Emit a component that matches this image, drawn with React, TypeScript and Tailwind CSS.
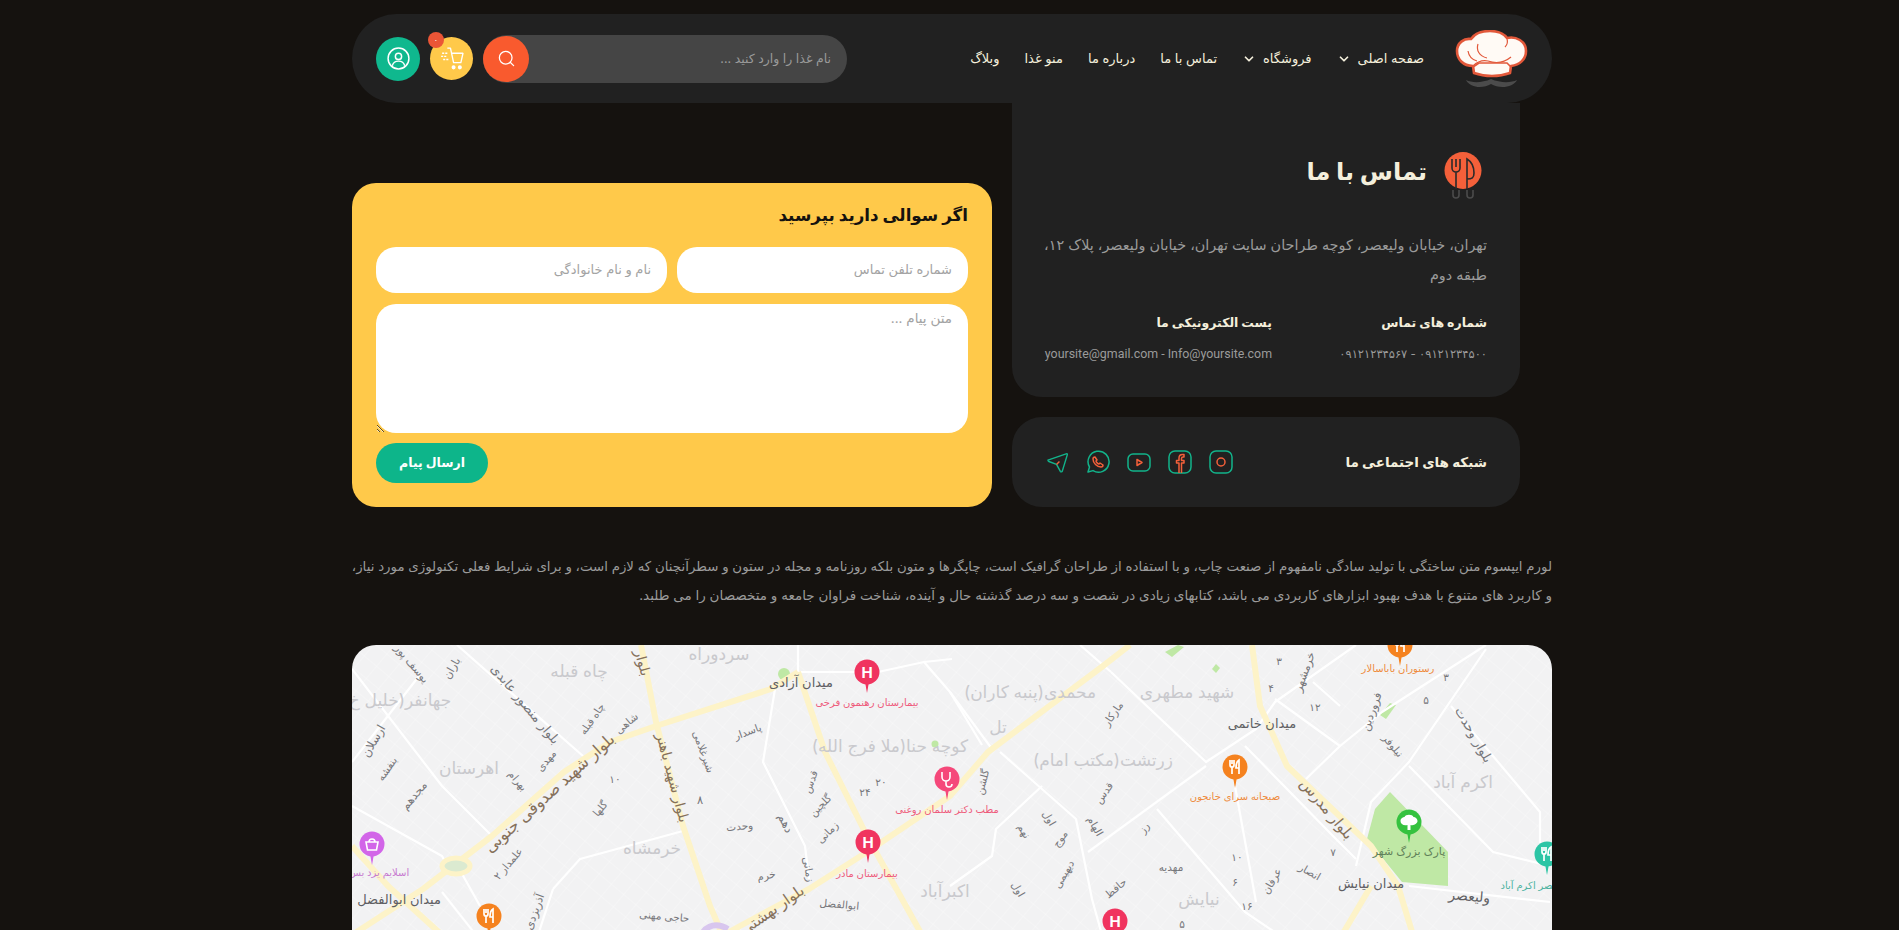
import { ChevronDown, Search } from 'lucide-react';

const navItems = [
  { label: 'صفحه اصلی', arrow: true },
  { label: 'فروشگاه', arrow: true },
  { label: 'تماس با ما', arrow: false },
  { label: 'درباره ما', arrow: false },
  { label: 'منو غذا', arrow: false },
  { label: 'وبلاگ', arrow: false },
];

const GREEN = '#12b48b';
const RED = '#f4603a';

const yellowRoads = [
  '289,0 304,77 331,181 358,261 368,284 400,300',
  '0,290 71,244 140,191 212,127 258,97 304,81 419,44 446,27',
  '0,201 36,241 90,290',
  '446,27 473,107 515,191 570,290',
  '372,290 388,281 457,244 515,207 598,151 636,107 751,21 778,0',
  '900,0 908,61 935,121 1019,201 1046,241 1061,290',
  '1019,241 990,290',
];

const whiteRoads = [
  '105,0 231,111', '0,24 90,141 140,191', '67,31 0,117', '0,161 90,211 96,222',
  '201,244 228,214 331,186', '446,0 446,27', '423,44 411,117 453,201 457,234',
  '446,27 526,27 572,17 598,47 640,104', '572,17 600,14', '90,247 124,290', '109,227 128,261',
  '759,27 854,117 904,84 923,57 1004,0', '728,0 759,27', '854,121 736,207',
  '648,107 724,174 740,254 750,290', '690,141 644,184 640,211 598,241',
  '805,164 893,267 927,290', '883,141 904,257', '893,101 981,191 1004,214',
  '954,134 988,101 1030,67 1134,0', '1004,221 1019,157 1057,117 1134,4',
  '1057,121 1141,207 1198,221', '1057,241 1198,257', '1099,61 1188,167 1188,207',
  '923,54 988,101', '961,37 988,61', '201,244 186,290', '598,47 630,100',
];

type Label = [string, number, number, number, number, string];

const DIST = '#c9c9cd';
const ROAD = '#77777b';
const DARK = '#5f5f63';
const BROWN = '#85705a';
const PINK = '#ee5c7c';
const ORANGE = '#ee8a3c';

const labels: Label[] = [
  ['چاه قبله', 227, 32, 0, 17, DIST],
  ['جهانفر(خلیل خ', 48, 61, 0, 17, DIST],
  ['اهرستان', 117, 129, 0, 17, DIST],
  ['خرمشاه', 300, 209, 0, 17, DIST],
  ['سردوراه', 367, 15, 0, 17, DIST],
  ['کوچه حنا(ملا فرج الله)', 538, 107, 0, 17, DIST],
  ['محمدی(پنبه کاران)', 678, 53, 0, 17, DIST],
  ['شهید مطهری', 835, 53, 0, 17, DIST],
  ['تل', 646, 88, 0, 17, DIST],
  ['زرتشت(مکتب امام)', 751, 121, 0, 17, DIST],
  ['اکبرآباد', 593, 252, 0, 17, DIST],
  ['نیایش', 847, 260, 0, 17, DIST],
  ['اکرم آباد', 1111, 143, 0, 17, DIST],
  ['میدان آزادی', 449, 42, 0, 13, DARK],
  ['میدان خاتمی', 910, 83, 0, 13, DARK],
  ['میدان نیایش', 1019, 243, 0, 13, DARK],
  ['میدان ابوالفضل', 47, 259, 0, 13, DARK],
  ['ولیعصر', 1117, 256, 5, 14, DARK],
  ['پارک بزرگ شهر', 1057, 210, 0, 11, '#5f7f58'],
  ['بیمارستان رهنمون فرخی', 515, 61, 0, 10, PINK],
  ['بیمارستان مادر', 515, 232, 0, 10, PINK],
  ['مطب دکتر سلمان روغنی', 595, 168, 0, 10, PINK],
  ['اسلایم یزد بس', 27, 231, 0, 10, '#c77ad0'],
  ['رستوران باباسالار', 1046, 27, 0, 10, ORANGE],
  ['صبحانه سرای خانجون', 883, 155, 0, 10, ORANGE],
  ['نصر اکرم آباد', 1176, 244, 0, 10, '#4fb3a2'],
  ['بلوار شهید صدوقی جنوبی', 201, 152, -42, 16, BROWN],
  ['بلوار شهید باهنر', 316, 134, 75, 14, BROWN],
  ['بلوار', 286, 19, 75, 14, BROWN],
  ['بلوار بهشتی', 423, 269, -35, 15, BROWN],
  ['بلوار مدرس', 971, 167, 50, 15, BROWN],
  ['بلوار منصور عابدی', 170, 62, 50, 13, ROAD],
  ['بلوار وحدت', 1118, 92, 60, 13, ROAD],
  ['یوسف پور', 57, 21, 50, 11, ROAD],
  ['باران', 103, 25, -60, 11, ROAD],
  ['ارسلان', 25, 98, -60, 12, ROAD],
  ['بنفشه', 38, 126, -55, 10.5, ROAD],
  ['مجدهم', 65, 153, -50, 11.5, ROAD],
  ['بهرام', 163, 138, 50, 10.5, ROAD],
  ['مهدی', 197, 118, -50, 10.5, ROAD],
  ['چاه قبله', 243, 76, -55, 10.5, ROAD],
  ['شاهی', 277, 81, -40, 10.5, ROAD],
  ['پاسدار', 397, 90, -20, 10.5, ROAD],
  ['شیرغلامی', 348, 108, 70, 10.5, ROAD],
  ['۱۰', 263, 138, 0, 10.5, ROAD],
  ['گلها', 251, 166, -50, 10.5, ROAD],
  ['علمدار ۲', 159, 221, -50, 10.5, ROAD],
  ['۸', 348, 159, 0, 11.5, ROAD],
  ['وحدت', 388, 185, -5, 10.5, ROAD],
  ['دهم', 430, 180, 65, 12, ROAD],
  ['گلچین', 471, 163, -45, 10.5, ROAD],
  ['زمانی', 478, 190, -45, 10.5, ROAD],
  ['قدس', 462, 138, -70, 10.5, ROAD],
  ['زمانی', 453, 225, 80, 10.5, ROAD],
  ['خرم', 415, 234, -10, 10.5, ROAD],
  ['ابوالفضل', 487, 263, 5, 10.5, ROAD],
  ['حاجی مهنی', 312, 275, 5, 10.5, ROAD],
  ['آذریزدی', 186, 268, -70, 11.5, ROAD],
  ['۲۴', 513, 151, 0, 10.5, ROAD],
  ['۲۰', 529, 141, 0, 10.5, ROAD],
  ['مارکار', 764, 71, -55, 10.5, ROAD],
  ['خرمشهر', 956, 28, -70, 11.5, ROAD],
  ['فروردین', 1023, 68, -70, 11.5, ROAD],
  ['نیلوفر', 1038, 103, 50, 10.5, ROAD],
  ['قدس', 755, 150, -55, 10.5, ROAD],
  ['الهام', 740, 183, 60, 10.5, ROAD],
  ['اول', 694, 175, 60, 10.5, ROAD],
  ['نهم', 669, 188, 60, 10.5, ROAD],
  ['موج', 711, 196, -55, 10.5, ROAD],
  ['دیهیمی', 715, 231, -60, 10.5, ROAD],
  ['رز', 795, 185, -55, 10.5, ROAD],
  ['مهدیه', 819, 226, 0, 10.5, ROAD],
  ['حافظ', 766, 246, -40, 10.5, ROAD],
  ['عرفان', 923, 238, -60, 10.5, ROAD],
  ['انصار', 956, 230, 30, 10.5, ROAD],
  ['۱۰', 885, 216, 0, 10.5, ROAD],
  ['۶', 883, 241, 0, 10.5, ROAD],
  ['۱۶', 895, 265, 0, 10.5, ROAD],
  ['۵', 830, 283, 0, 10.5, ROAD],
  ['اول', 663, 246, 60, 10.5, ROAD],
  ['گلشن', 634, 138, -75, 10.5, ROAD],
  ['۷', 981, 211, 0, 10.5, ROAD],
  ['۱۲', 963, 66, 0, 10.5, ROAD],
  ['۵', 1074, 59, 0, 10.5, ROAD],
  ['۳', 1094, 36, 0, 10.5, ROAD],
  ['۴', 919, 47, 0, 10.5, ROAD],
  ['۳', 927, 20, 0, 10.5, ROAD],
];

const pins: { x: number; y: number; color: string; glyph: string }[] = [
  { x: 515, y: 27, color: '#f0345f', glyph: 'H' },
  { x: 516, y: 197, color: '#f0345f', glyph: 'H' },
  { x: 763, y: 276, color: '#f0345f', glyph: 'H' },
  { x: 595, y: 134, color: '#f5487a', glyph: 'steth' },
  { x: 20, y: 199, color: '#d265e8', glyph: 'bag' },
  { x: 137, y: 271, color: '#f5821f', glyph: 'food' },
  { x: 883, y: 122, color: '#f5821f', glyph: 'food' },
  { x: 1048, y: 0, color: '#f5821f', glyph: 'food' },
  { x: 1057, y: 177, color: '#35c23f', glyph: 'tree' },
  { x: 1195, y: 209, color: '#2cc5a5', glyph: 'food' },
];

function Pin({ x, y, color, glyph }: { x: number; y: number; color: string; glyph: string }) {
  return (
    <g transform={`translate(${x} ${y})`}>
      <path d="M-2 10 L0 21 L2 10 Z" fill={color} />
      <circle r="12.5" fill={color} />
      {glyph === 'H' && (
        <text textAnchor="middle" y="5.5" fontSize="15" fontWeight="700" fill="#fff" fontFamily="Inter">H</text>
      )}
      {glyph === 'food' && (
        <path d="M-5 -7v5a2 2 0 0 0 2 2v7M-3 -7v4M-1 -7v5a2 2 0 0 1-2 2M4 7v-14c-2 1-3 4-3 8h3" stroke="#fff" strokeWidth="1.7" fill="none" />
      )}
      {glyph === 'tree' && (
        <path d="M-1.5 8v-5c-4 1-7-1-7-4s3-4 4-4c1-3 8-3 9 0 2 0 4 2 4 4s-3 5-7 4v5z" fill="#fff" />
      )}
      {glyph === 'bag' && (
        <path d="M-6 -2h12l-1.5 8h-9zM-3 -2a3 3 0 0 1 6 0" stroke="#fff" strokeWidth="1.6" fill="none" />
      )}
      {glyph === 'steth' && (
        <path d="M-5 -7v5a4 4 0 0 0 8 0v-5M-1 2v3a3 3 0 0 0 6 0" stroke="#fff" strokeWidth="1.6" fill="none" />
      )}
    </g>
  );
}

function CityMap() {
  return (
    <svg viewBox="0 0 1200 400" className="block h-full w-full" style={{ direction: 'rtl' }}>
      <defs>
        <pattern id="streets" width="16" height="16" patternUnits="userSpaceOnUse" patternTransform="rotate(40)">
          <path d="M0 0H16M0 0V16" stroke="#ffffff" strokeWidth="0.8" opacity="0.55" fill="none" />
        </pattern>
      </defs>
      <rect width="1200" height="400" fill="#f2f2f3" />
      <rect width="1200" height="400" fill="url(#streets)" />
      <g fill="#bfe8a5">
        <path d="M1038 147 1096 207 1096 241 1050 237 1015 194 1023 164Z" />
        <path d="M813 7 826 0 832 2 820 12Z" />
        <path d="M860 24 864 19 868 23 864 28Z" />
        <path d="M1028 70 1038 58 1044 60 1034 74Z" />
        <circle cx="432" cy="29" r="6" />
        <circle cx="583" cy="99" r="3.5" />
      </g>
      <g fill="none" stroke="#ffffff" strokeWidth="2.2" strokeLinejoin="round">
        {whiteRoads.map((points) => (
          <polyline key={points} points={points} />
        ))}
      </g>
      <g fill="none" stroke="#fdf3c8" strokeWidth="6" strokeLinejoin="round">
        {yellowRoads.map((points) => (
          <polyline key={points} points={points} />
        ))}
      </g>
      <ellipse cx="104" cy="221" rx="14" ry="8" fill="#dbead0" stroke="#fdf3c8" strokeWidth="5" />
      <path d="M348 296C350 282 362 276 376 284" fill="none" stroke="#d8c6ee" strokeWidth="6" />
      {labels.map(([text, x, y, rotate, size, color]) => (
        <text
          key={`${text}-${x}`}
          x={x}
          y={y}
          textAnchor="middle"
          fontSize={size}
          fill={color}
          transform={rotate ? `rotate(${rotate} ${x} ${y})` : undefined}
        >
          {text}
        </text>
      ))}
      {pins.map((pin) => (
        <Pin key={`${pin.x}-${pin.y}`} {...pin} />
      ))}
    </svg>
  );
}

function ChefLogo() {
  return (
    <svg viewBox="0 0 73 58" className="h-[58px] w-[73px] shrink-0">
      <path
        d="M19 43 18 36C8 36 2 29 2 21 2 13 9 8 16 9 20 3 28 1 35 1 43 1 49 4 52 8 61 6 71 11 71 21 71 29 65 35 56 36L55 43C44 47 30 47 19 43Z"
        fill="#fffaf5"
        stroke="#e2583a"
        strokeWidth="2.6"
        strokeLinejoin="round"
      />
      <path d="M18 36C22 32 28 30 33 31 42 34 50 32 56 27M13 21C14 27 18 30 22 31M23 14C21 20 24 26 32 28M52 9C53 12 52 15 50 17" fill="none" stroke="#e2583a" strokeWidth="1.2" />
      <path d="M18 37 24 33 52 33 56 37" fill="none" stroke="#e2583a" strokeWidth="1.6" />
      <path d="M11 50C17 53 27 53 36 49 45 53 56 53 62 50 58 58 44 59 36 54 28 59 15 58 11 50Z" fill="#4b4b4b" />
    </svg>
  );
}

function UtensilsBadge() {
  return (
    <svg viewBox="0 0 38 47" className="h-[47px] w-[38px] shrink-0">
      <circle cx="19" cy="18.5" r="18.5" fill={RED} />
      <g fill="none" strokeWidth="1.6">
        <path d="M9 38v5a3 3 0 0 0 6 0v-5M23 38v5a3 3 0 0 0 6 0v-5" stroke="#4b4b4b" />
        <path d="M8 7v9a4 4 0 0 0 4 4v17M12 7v8M16 7v9a4 4 0 0 1-4 4" stroke="#2a2a2a" />
        <path d="M23 37V7c5 3 7 9 7 14s-2 6-7 6" stroke="#2a2a2a" />
      </g>
    </svg>
  );
}

function SocialIcons() {
  const box = 'h-6 w-6 shrink-0';
  return (
    <div dir="ltr" className="flex items-center gap-[17px]">
      <svg viewBox="0 0 24 24" className="h-[23px] w-[23px] shrink-0" fill="none" strokeWidth="1.5">
        <path d="M2 9.5 21 3c1-.3 1.5 0 1.2 1L17 21c-.4 1-1.5 1-2 .2L11 14 3 11c-1-.4-1-1.2-1-1.5z" stroke={GREEN} strokeLinejoin="round" />
        <path d="M11 14l3-3" stroke={RED} />
      </svg>
      <svg viewBox="0 0 24 24" className={box} fill="none" strokeWidth="1.5">
        <path d="M2 22l1.5-5A10.5 10.5 0 1 1 7 20.6z" stroke={GREEN} strokeLinejoin="round" />
        <path d="M9 7c-1 0-2 1-2 2 0 4 4 8 8 8 1 0 2-1 2-2l-3-2-1 1c-1 0-3-2-3-3l1-1z" stroke={RED} strokeLinejoin="round" />
      </svg>
      <svg viewBox="0 0 24 24" className={box} fill="none" strokeWidth="1.5">
        <rect x="1" y="4" width="22" height="17" rx="5" stroke={GREEN} />
        <path d="M10 9.5v6l5-3z" stroke={RED} strokeLinejoin="round" />
      </svg>
      <svg viewBox="0 0 24 24" className={box} fill="none" strokeWidth="1.5">
        <rect x="1" y="1" width="22" height="22" rx="6" stroke={GREEN} />
        <path d="M11 23V13H8.5v-2.5H11V8c0-2 1.5-3.5 3.5-3.5H16V7h-1c-1 0-1.5.5-1.5 1.5v2H16V13h-2.5v10" stroke={RED} strokeLinejoin="round" />
      </svg>
      <svg viewBox="0 0 24 24" className={box} fill="none" strokeWidth="1.5">
        <rect x="1" y="1" width="22" height="22" rx="6" stroke={GREEN} />
        <circle cx="12" cy="12" r="4" stroke={RED} />
        <path d="M17.5 6.5h.01" stroke={RED} />
      </svg>
    </div>
  );
}

export default function App() {
  return (
    <div className="h-screen overflow-hidden bg-[#15120f] pl-[5px] font-['Inter','DejaVu_Sans',sans-serif]" dir="rtl">
      <div className="mx-auto w-[1200px] pt-[14px]">
        {/* Header */}
        <header className="flex h-[89px] items-center justify-between rounded-[45px] bg-[#212121] pl-6 pr-6">
          <div className="flex items-center gap-[31px]">
            <ChefLogo />
            <nav className="flex items-center gap-[25px] text-[13px] text-[#f4efdc]">
              {navItems.map(({ label, arrow }) => (
                <a key={label} className="flex items-center gap-[7px]">
                  {label}
                  {arrow && <ChevronDown className="h-[14px] w-[14px]" strokeWidth={3} />}
                </a>
              ))}
            </nav>
          </div>
          <div className="flex items-center gap-[10px]">
            <div className="relative h-12 w-[364px] rounded-3xl bg-[#454545]">
              <input
                placeholder="نام غذا را وارد کنید ..."
                className="h-full w-full bg-transparent pl-14 pr-4 text-[12.5px] text-white outline-none placeholder:text-[#9a9a9a]"
              />
              <button className="absolute left-0 top-px flex h-[46px] w-[46px] items-center justify-center rounded-full bg-[#f95a2e] text-white">
                <Search className="h-[19px] w-[19px]" strokeWidth={1.6} />
              </button>
            </div>
            <div className="relative flex h-[43px] w-[43px] items-center justify-center rounded-full bg-[#ffc94a]">
              <svg viewBox="0 0 24 24" className="h-[25px] w-[25px]" fill="none" stroke="#fff" strokeWidth="1.3" strokeLinejoin="round">
                <path d="M8 2h3l3 14h7l2-9H12M15 16h6" />
                <circle cx="14" cy="20.5" r="1.3" fill="#fff" />
                <circle cx="20" cy="20.5" r="1.3" fill="#fff" />
                <path d="M3 7h5M2 10h6M4 13h5" strokeDasharray="2 1" />
              </svg>
              <span className="absolute -left-[2px] -top-[5px] flex h-[16px] w-[16px] items-center justify-center rounded-full bg-[#eb5536] text-[8px] leading-none text-white">
                ۰
              </span>
            </div>
            <div className="flex h-11 w-11 items-center justify-center rounded-full bg-[#0fb88e]">
              <svg viewBox="0 0 24 24" className="h-[25px] w-[25px]" fill="none" stroke="#fff" strokeWidth="1.4">
                <circle cx="12" cy="12" r="10" />
                <circle cx="12" cy="10" r="3" />
                <path d="M6 19c.8-3 3-4.5 6-4.5s5.2 1.5 6 4.5" />
              </svg>
            </div>
          </div>
        </header>

        {/* Contact + form */}
        <section className="flex items-end gap-5 pr-8">
          <div className="flex w-[508px] shrink-0 flex-col gap-5">
            <div className="h-[294px] rounded-b-[30px] bg-[#212121] pl-[25px] pr-[33px] pt-[49px]">
              <div className="mr-[5px] flex items-start gap-[17px]">
                <UtensilsBadge />
                <h1 className="text-[24px] font-bold leading-[40px] text-[#f4efdc]">تماس با ما</h1>
              </div>
              <p className="mt-[31px] text-[14.4px] leading-[30px] text-[#9b9b9b]">
                تهران، خیابان ولیعصر، کوچه طراحان سایت تهران، خیابان ولیعصر، پلاک ۱۲، طبقه دوم
              </p>
              <div className="mt-[23px] flex">
                <div className="w-[215px] shrink-0">
                  <h2 className="text-[12.5px] font-bold leading-5 text-[#f4efdc]">شماره های تماس</h2>
                  <p className="mt-[11px] text-[11.5px] leading-5 text-[#9b9b9b]">۰۹۱۲۱۲۳۴۵۰۰ - ۰۹۱۲۱۲۳۴۵۶۷</p>
                </div>
                <div>
                  <h2 className="text-[12.5px] font-bold leading-5 text-[#f4efdc]">پست الکترونیکی ما</h2>
                  <p className="mt-[11px] whitespace-nowrap font-['Roboto',sans-serif] text-[12.4px] leading-5 text-[#9b9b9b]">yoursite@gmail.com - Info@yoursite.com</p>
                </div>
              </div>
            </div>
            <div className="flex h-[90px] items-center justify-between rounded-[30px] bg-[#212121] pl-[34px] pr-[33px]">
              <h2 className="text-[13.5px] font-bold text-[#f4efdc]">شبکه های اجتماعی ما</h2>
              <SocialIcons />
            </div>
          </div>

          <form className="flex h-[324px] w-[640px] shrink-0 flex-col rounded-3xl bg-[#ffc94a] px-6 pt-[16px]">
            <h2 className="text-[16.7px] font-bold leading-8 text-[#15120f]">اگر سوالی دارید بپرسید</h2>
            <div className="mt-4 flex gap-[10px]">
              <input
                placeholder="شماره تلفن تماس"
                className="h-[46px] min-w-0 flex-1 rounded-[20px] bg-white px-4 pb-[3px] text-[13px] outline-none placeholder:text-[#a3a3a3]"
              />
              <input
                placeholder="نام و نام خانوادگی"
                className="h-[46px] min-w-0 flex-1 rounded-[20px] bg-white px-4 pb-[3px] text-[13px] outline-none placeholder:text-[#a3a3a3]"
              />
            </div>
            <textarea
              placeholder="متن پیام ..."
              className="mt-[11px] h-[129px] rounded-[20px] bg-white px-4 py-1 text-[13.5px] outline-none placeholder:text-[#a3a3a3]"
            />
            <button type="button" className="mt-[10px] h-10 w-[112px] self-end rounded-[20px] bg-[#0db58a] text-[12.5px] font-bold text-white">
              ارسال پیام
            </button>
          </form>
        </section>

        {/* Intro text */}
        <div className="mt-[45px] leading-[29px] text-[#9b9b9b]">
          <p className="whitespace-nowrap text-[13.35px]">
            لورم ایپسوم متن ساختگی با تولید سادگی نامفهوم از صنعت چاپ، و با استفاده از طراحان گرافیک است، چاپگرها و متون بلکه روزنامه و مجله در ستون و سطرآنچنان که لازم است، و برای شرایط فعلی تکنولوژی مورد نیاز،
          </p>
          <p className="whitespace-nowrap text-[13.5px]">
            و کاربرد های متنوع با هدف بهبود ابزارهای کاربردی می باشد، کتابهای زیادی در شصت و سه درصد گذشته حال و آینده، شناخت فراوان جامعه و متخصصان را می طلبد.
          </p>
        </div>

        {/* Map */}
        <div className="mt-[35px] h-[400px] overflow-hidden rounded-3xl">
          <CityMap />
        </div>
      </div>
    </div>
  );
}
